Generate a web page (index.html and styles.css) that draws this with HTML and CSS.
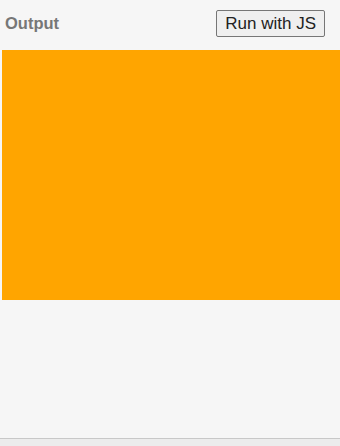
FILE: index.html
```html
<!DOCTYPE html>
<html lang="en">
<head>
    <meta charset="UTF-8">
    <title>Output</title>
    <link rel="stylesheet" href="styles.css">
</head>
<body>
    <div class="panel">
        <div class="panel-header">
            <span class="panel-title">Output</span>
            <button class="run-button">Run with JS</button>
        </div>
        <div class="output">
            <div class="box"></div>
        </div>
    </div>
    <div class="status-bar"></div>
</body>
</html>
```

FILE: styles.css
```css
html, body {
    margin: 0;
    padding: 0;
    height: 100%;
}

body {
    background: #f6f6f6;
    font-family: 'Liberation Sans', Arial, sans-serif;
    display: flex;
    flex-direction: column;
    overflow: hidden;
}

.panel {
    flex: 1;
}

.panel-header {
    display: flex;
    justify-content: space-between;
    align-items: flex-start;
    height: 50px;
    padding: 10px 15px 0 5px;
    box-sizing: border-box;
}

.panel-title {
    margin-top: 4px;
    font-size: 16.5px;
    line-height: 18px;
    font-weight: bold;
    color: #777;
}

.run-button {
    height: 27px;
    padding: 0 8px;
    font-family: 'Liberation Sans', Arial, sans-serif;
    font-size: 17px;
    color: #222;
    background: #efefef;
    border: 1px solid #767676;
    border-radius: 2px;
}

.output {
    padding-left: 2px;
}

.box {
    width: 338px;
    height: 250px;
    background: orange;
}

.status-bar {
    height: 7px;
    border-top: 1px solid #c8c8c8;
    background: #ececec;
}
```
